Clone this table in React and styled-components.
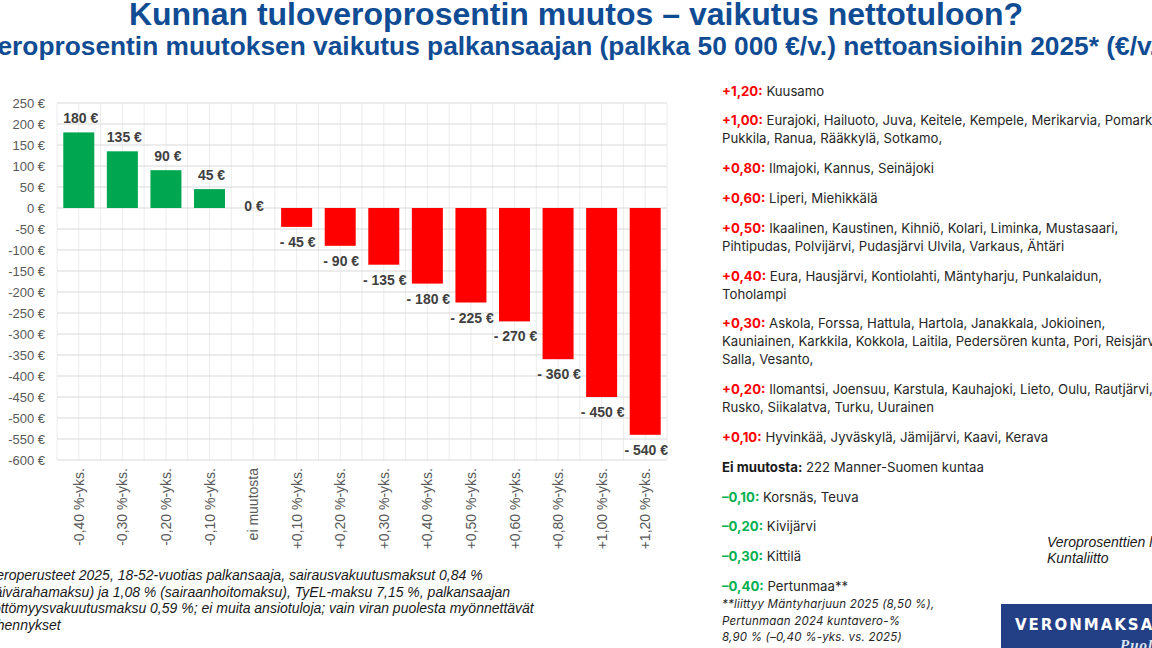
import styled, { createGlobalStyle } from 'styled-components';

const GlobalStyle = createGlobalStyle`
    body {
        margin: 0;
        background: #fff;
        font-family: "Liberation Sans", Arial, sans-serif;
    }
`;

// chart geometry, in page pixels
const ZERO_Y = 208;
const PX_PER_EUR = 0.42;
const PLOT_LEFT = 57;
const PLOT_RIGHT = 667;
const BAR_W = 31;

const bars = [
    { label: '-0,40 %-yks.', value: 180 },
    { label: '-0,30 %-yks.', value: 135 },
    { label: '-0,20 %-yks.', value: 90 },
    { label: '-0,10 %-yks.', value: 45 },
    { label: 'ei muutosta', value: 0 },
    { label: '+0,10 %-yks.', value: -45 },
    { label: '+0,20 %-yks.', value: -90 },
    { label: '+0,30 %-yks.', value: -135 },
    { label: '+0,40 %-yks.', value: -180 },
    { label: '+0,50 %-yks.', value: -225 },
    { label: '+0,60 %-yks.', value: -270 },
    { label: '+0,80 %-yks.', value: -360 },
    { label: '+1,00 %-yks.', value: -450 },
    { label: '+1,20 %-yks.', value: -540 },
];

const ticks = [];
for (let v = 250; v >= -600; v -= 50) ticks.push(v);

const entries = [
    { tag: '+1,20:', tone: 'red', lines: ['Kuusamo'] },
    { tag: '+1,00:', tone: 'red', lines: ['Eurajoki, Hailuoto, Juva, Keitele, Kempele, Merikarvia, Pomarkku,', 'Pukkila, Ranua, Rääkkylä, Sotkamo,'] },
    { tag: '+0,80:', tone: 'red', lines: ['Ilmajoki, Kannus, Seinäjoki'] },
    { tag: '+0,60:', tone: 'red', lines: ['Liperi, Miehikkälä'] },
    { tag: '+0,50:', tone: 'red', lines: ['Ikaalinen, Kaustinen, Kihniö, Kolari, Liminka, Mustasaari,', 'Pihtipudas, Polvijärvi, Pudasjärvi Ulvila, Varkaus, Ähtäri'] },
    { tag: '+0,40:', tone: 'red', lines: ['Eura, Hausjärvi, Kontiolahti, Mäntyharju, Punkalaidun,', 'Toholampi'] },
    { tag: '+0,30:', tone: 'red', lines: ['Askola, Forssa, Hattula, Hartola, Janakkala, Jokioinen,', 'Kauniainen, Karkkila, Kokkola, Laitila, Pedersören kunta, Pori, Reisjärvi,', 'Salla, Vesanto,'] },
    { tag: '+0,20:', tone: 'red', lines: ['Ilomantsi, Joensuu, Karstula, Kauhajoki, Lieto, Oulu, Rautjärvi,', 'Rusko, Siikalatva, Turku, Uurainen'] },
    { tag: '+0,10:', tone: 'red', lines: ['Hyvinkää, Jyväskylä, Jämijärvi, Kaavi, Kerava'] },
    { tag: 'Ei muutosta:', tone: 'dark', lines: ['222 Manner-Suomen kuntaa'] },
    { tag: '–0,10:', tone: 'green', lines: ['Korsnäs, Teuva'] },
    { tag: '–0,20:', tone: 'green', lines: ['Kivijärvi'] },
    { tag: '–0,30:', tone: 'green', lines: ['Kittilä'] },
    { tag: '–0,40:', tone: 'green', lines: ['Pertunmaa**'] },
];

const fmt = (v) => (v < 0 ? `- ${-v} €` : `${v} €`);

const Chart = () => {
    const step = (PLOT_RIGHT - PLOT_LEFT) / bars.length;
    const top = ZERO_Y - 250 * PX_PER_EUR;
    const bottom = ZERO_Y + 600 * PX_PER_EUR;
    const verticals = [];
    for (let k = 0; k <= bars.length * 2; k++) verticals.push(PLOT_LEFT + (k * step) / 2);

    return (
        <ChartSvg viewBox="0 66 700 494" width="700" height="494">
            {verticals.map((x) => (
                <line key={x} x1={x} x2={x} y1={top} y2={bottom} stroke="#ececec" strokeWidth="1" />
            ))}
            {ticks.map((v) => {
                let y = ZERO_Y - v * PX_PER_EUR;
                return (
                    <g key={v}>
                        <line x1={PLOT_LEFT} x2={PLOT_RIGHT} y1={y} y2={y} stroke="#d9d9d9" strokeWidth="1" />
                        <AxisText x="45" y={y + 4.6} textAnchor="end">{`${v} €`}</AxisText>
                    </g>
                );
            })}
            {bars.map((b, i) => {
                let cx = PLOT_LEFT + step * (i + 0.5);
                let h = Math.abs(b.value) * PX_PER_EUR;
                let y = b.value >= 0 ? ZERO_Y - h : ZERO_Y;
                let labelY = b.value > 0 ? y - 9 : b.value < 0 ? ZERO_Y + h + 20 : ZERO_Y + 2.7;
                return (
                    <g key={b.label}>
                        {b.value !== 0 && (
                            <rect x={cx - BAR_W / 2} y={y} width={BAR_W} height={h} fill={b.value > 0 ? '#00a650' : '#ff0000'} />
                        )}
                        <ValueText x={b.value > 0 ? cx + 2 : cx + 1} y={labelY} textAnchor="middle">{fmt(b.value)}</ValueText>
                        <AxisText transform={`translate(${cx + 5}, 468) rotate(-90)`} textAnchor="end" $size={14}>
                            {b.label}
                        </AxisText>
                    </g>
                );
            })}
        </ChartSvg>
    );
};

const App = () => {
    return (
        <>
            <GlobalStyle />
            <Page>
                <Header>
                    <Title>Kunnan tuloveroprosentin muutos – vaikutus nettotuloon?</Title>
                    <Subtitle>Tuloveroprosentin muutoksen vaikutus palkansaajan (palkka 50 000 €/v.) nettoansioihin 2025* (€/v.)</Subtitle>
                </Header>
                <Main>
                    <LeftCol>
                        <Chart />
                        <Footnote>
                            *Veroperusteet 2025, 18-52-vuotias palkansaaja, sairausvakuutusmaksut 0,84 %<br />
                            (päivärahamaksu) ja 1,08 % (sairaanhoitomaksu), TyEL-maksu 7,15 %, palkansaajan<br />
                            työttömyysvakuutusmaksu 0,59 %; ei muita ansiotuloja; vain viran puolesta myönnettävät<br />
                            vähennykset
                        </Footnote>
                    </LeftCol>
                    <RightCol>
                        <List>
                            {entries.map((e) => (
                                <Entry key={e.tag}>
                                    <Tag $tone={e.tone}>{e.tag}</Tag>{' '}
                                    {e.lines.map((l, i) => (
                                        <span key={i}>
                                            {i > 0 && <br />}
                                            {l}
                                        </span>
                                    ))}
                                </Entry>
                            ))}
                            <Note>
                                **liittyy Mäntyharjuun 2025 (8,50 %),<br />
                                Pertunmaan 2024 kuntavero-%<br />
                                8,90 % (–0,40 %-yks. vs. 2025)
                            </Note>
                        </List>
                        <Aside>
                            <Source>
                                Veroprosenttien lähde:<br />
                                Kuntaliitto
                            </Source>
                            <Logo>
                                <LogoName>VERONMAKSAJAT</LogoName>
                                <LogoTag>Puolellasi</LogoTag>
                            </Logo>
                        </Aside>
                    </RightCol>
                </Main>
            </Page>
        </>
    );
};

let Page = styled.div`
    width: 1152px;
    height: 648px;
    overflow: hidden;
    display: flex;
    flex-direction: column;
    background: #fff;
`;

let Header = styled.header`
    height: 66px;
    flex: none;
    display: flex;
    flex-direction: column;
    align-items: center;
    color: #104c94;
    font-weight: 700;
    white-space: nowrap;
`;

let Title = styled.h1`
    margin: 0;
    font-size: 32px;
    line-height: 29px;
    font-weight: 700;
`;

let Subtitle = styled.h2`
    margin: 3px 0 0 -57px;
    font-size: 26.3px;
    line-height: 28px;
    font-weight: 700;
`;

let Main = styled.main`
    flex: 1;
    display: flex;
    min-height: 0;
`;

let LeftCol = styled.section`
    width: 700px;
    flex: none;
    display: flex;
    flex-direction: column;
`;

let ChartSvg = styled.svg`
    display: block;
    flex: none;
    font-family: "Liberation Sans", Arial, sans-serif;
`;

let AxisText = styled.text`
    font-size: ${(p) => p.$size || 13}px;
    fill: #595959;
`;

let ValueText = styled.text`
    font-size: 14px;
    font-weight: 700;
    fill: #404040;
`;

let Footnote = styled.p`
    margin: 7px 0 0 -18px;
    font-size: 14px;
    line-height: 16.5px;
    font-style: italic;
    color: #1a1a1a;
    white-space: nowrap;
`;

let RightCol = styled.section`
    flex: 1;
    display: flex;
    padding-left: 22px;
`;

let List = styled.div`
    width: 279px;
    flex: none;
    padding-top: 15.7px;
    font-family: Inter, "Noto Sans", sans-serif;
    font-size: 13.2px;
    color: #262626;
    white-space: nowrap;
`;

let Entry = styled.p`
    margin: 0 0 11.8px;
    line-height: 18px;
`;

let Tag = styled.span`
    font-weight: 700;
    color: ${(p) => (p.$tone === 'red' ? '#ff0000' : p.$tone === 'green' ? '#00b050' : '#1a1a1a')};
`;

let Note = styled.p`
    margin: -10.8px 0 0;
    font-size: 11.5px;
    line-height: 16.7px;
    font-style: italic;
    letter-spacing: 0.2px;
`;

let Aside = styled.aside`
    flex: 1;
    display: flex;
    flex-direction: column;
    justify-content: flex-end;
`;

let Source = styled.p`
    margin: 0 0 38px 46px;
    font-size: 14px;
    line-height: 16px;
    font-style: italic;
    color: #1a1a1a;
    white-space: nowrap;
`;

let Logo = styled.div`
    width: 200px;
    height: 44px;
    flex: none;
    box-sizing: border-box;
    padding: 12px 0 0 14px;
    background: #233f86;
    display: flex;
    flex-direction: column;
    white-space: nowrap;
`;

let LogoName = styled.span`
    font-family: "DejaVu Sans", sans-serif;
    font-weight: 700;
    font-size: 15px;
    line-height: 18px;
    letter-spacing: 2px;
    color: #fff;
`;

let LogoTag = styled.span`
    margin: 2px 0 0 105px;
    font-family: "Liberation Serif", serif;
    font-style: italic;
    font-weight: 700;
    font-size: 15px;
    line-height: 18px;
    letter-spacing: 1px;
    color: #dfe6f3;
`;

export default App;
